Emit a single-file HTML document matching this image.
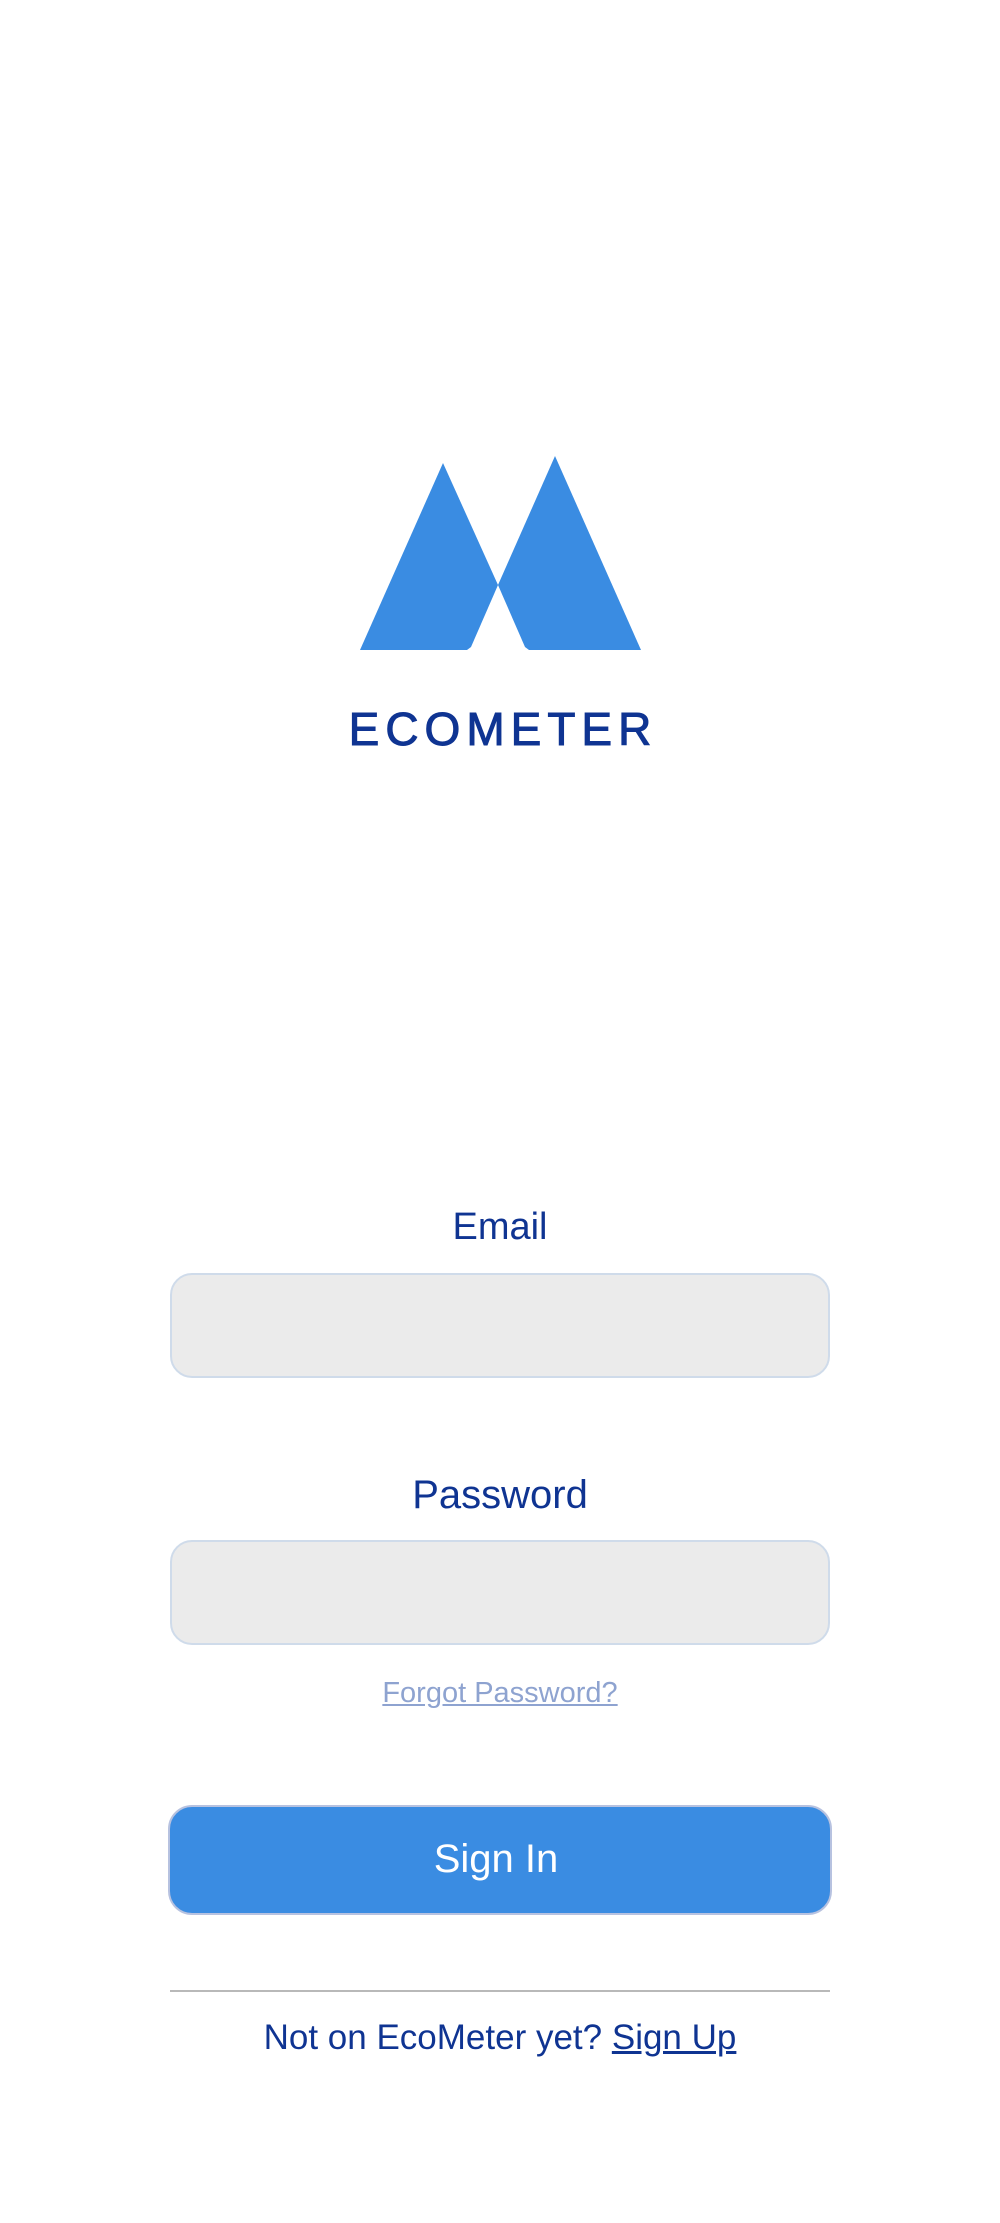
<!DOCTYPE html>
<html><head><meta charset="utf-8"><style>
html,body{margin:0;padding:0;background:#fff;}
body{width:1000px;height:2223px;position:relative;overflow:hidden;font-family:"Liberation Sans",sans-serif;color:#0f3492;}
.t{position:absolute;left:0;width:1000px;text-align:center;white-space:nowrap;}
.box{position:absolute;left:170px;width:660px;background:#ebebeb;border:2px solid #cfdbea;border-radius:22px;box-sizing:border-box;}
</style></head><body>
<svg style="position:absolute;left:0;top:0" width="1000" height="760">
<polygon points="443,463 498,585 471,647 467,650 360,650" fill="#3a8ce2"/>
<polygon points="555,456 641,650 529,650 525,647 498,585" fill="#3a8ce2"/>
</svg>
<div class="t" style="top:704px;font-size:46px;line-height:50px;letter-spacing:6px;text-indent:6px;-webkit-text-stroke:1px #0f3492;">ECOMETER</div>
<div class="t" style="top:1205px;font-size:38px;line-height:44px;">Email</div>
<div class="box" style="top:1273px;height:105px;"></div>
<div class="t" style="top:1473px;font-size:40px;line-height:44px;">Password</div>
<div class="box" style="top:1540px;height:105px;"></div>
<div class="t" style="top:1676px;font-size:29px;line-height:34px;color:#8ea3d0;"><span style="text-decoration:underline;">Forgot Password?</span></div>
<div style="position:absolute;left:168px;top:1805px;width:664px;height:110px;box-sizing:border-box;background:#3a8ce2;border:2px solid #b7c2e0;border-radius:24px;color:#fff;font-size:40px;line-height:104px;text-align:center;text-indent:-8px;">Sign In</div>
<div style="position:absolute;left:170px;top:1990px;width:660px;height:2px;background:#b9b9b9;"></div>
<div class="t" style="top:2018px;font-size:35px;line-height:40px;">Not on EcoMeter yet? <span style="text-decoration:underline;">Sign Up</span></div>
</body></html>
